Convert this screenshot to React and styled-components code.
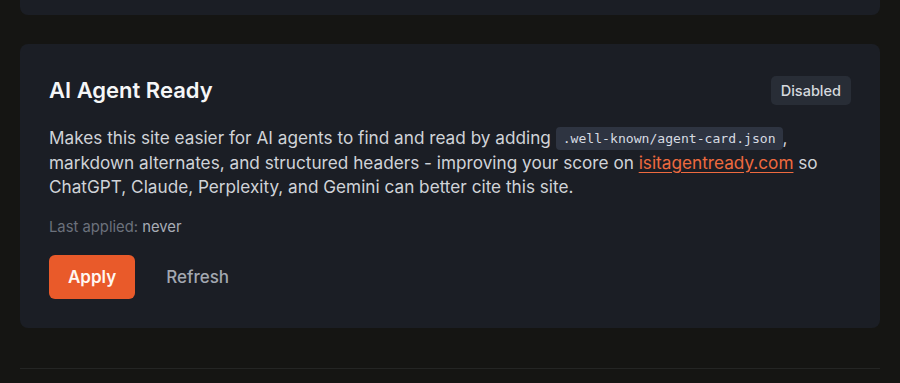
import React from "react";
import styled, { createGlobalStyle } from "styled-components";

const GlobalStyle = createGlobalStyle`
    html, body {
        margin: 0;
        padding: 0;
        background: #151513;
        font-family: Inter, "Noto Sans", sans-serif;
    }
    * {
        box-sizing: border-box;
    }
`;

const Page = styled.div`
    width: 900px;
    height: 383px;
    padding: 0 20px;
    overflow: hidden;
`;

const PrevCard = styled.div`
    height: 15px;
    background: #1b1e25;
    border-radius: 0 0 8px 8px;
`;

const Card = styled.section`
    margin-top: 29px;
    background: #1b1e25;
    border-radius: 8px;
    padding: 30px 29px 29px;
`;

const Header = styled.div`
    display: flex;
    align-items: center;
    justify-content: space-between;
`;

const Title = styled.h3`
    margin: 0;
    font-size: 22px;
    line-height: 32px;
    font-weight: 600;
    color: #f5f6f7;
`;

const Badge = styled.span`
    display: inline-flex;
    align-items: center;
    height: 29px;
    padding: 0 10px;
    border-radius: 5px;
    background: #282d36;
    color: #d6d9de;
    font-size: 14.5px;
    font-weight: 500;
`;

const Description = styled.p`
    margin: 20px 0 0;
    font-size: 17.2px;
    line-height: 24.5px;
    color: #d0d3d8;
`;

const Code = styled.code`
    display: inline-block;
    padding: 0 7px;
    line-height: 23px;
    vertical-align: 1px;
    border-radius: 4px;
    background: #2e3441;
    color: #d7dbe2;
    font-family: "DejaVu Sans Mono", "Liberation Mono", monospace;
    font-size: 13.1px;
`;

const Link = styled.a`
    color: #ee6a3f;
    text-decoration: underline;
    text-underline-offset: 3px;
`;

const Meta = styled.p`
    margin: 17px 0 0;
    font-size: 14.8px;
    line-height: 20px;
    color: #6b717c;
`;

const MetaValue = styled.span`
    color: #a7acb5;
`;

const Actions = styled.div`
    display: flex;
    align-items: center;
    gap: 12px;
    margin-top: 18px;
`;

const Button = styled.button`
    height: 44px;
    padding: 0 19px;
    border: none;
    border-radius: 6px;
    font-family: inherit;
    font-size: 17px;
    font-weight: ${(props) => (props.primary ? 600 : 500)};
    background: ${(props) => (props.primary ? "#e95a2a" : "transparent")};
    color: ${(props) => (props.primary ? "#fff7f2" : "#a3a8b1")};
    cursor: pointer;
`;

const Divider = styled.hr`
    margin: 40px 0 0;
    border: none;
    border-top: 1px solid #242524;
`;

const App = () => (
    <>
        <GlobalStyle />
        <Page>
            <PrevCard />
            <Card>
                <Header>
                    <Title>AI Agent Ready</Title>
                    <Badge>Disabled</Badge>
                </Header>
                <Description>
                    Makes this site easier for AI agents to find and read by
                    adding <Code>.well-known/agent-card.json</Code>, markdown
                    alternates, and structured headers - improving your score
                    on <Link href="#">isitagentready.com</Link> so ChatGPT,
                    Claude, Perplexity, and Gemini can better cite this site.
                </Description>
                <Meta>
                    Last applied: <MetaValue>never</MetaValue>
                </Meta>
                <Actions>
                    <Button primary>Apply</Button>
                    <Button>Refresh</Button>
                </Actions>
            </Card>
            <Divider />
        </Page>
    </>
);

export default App;
